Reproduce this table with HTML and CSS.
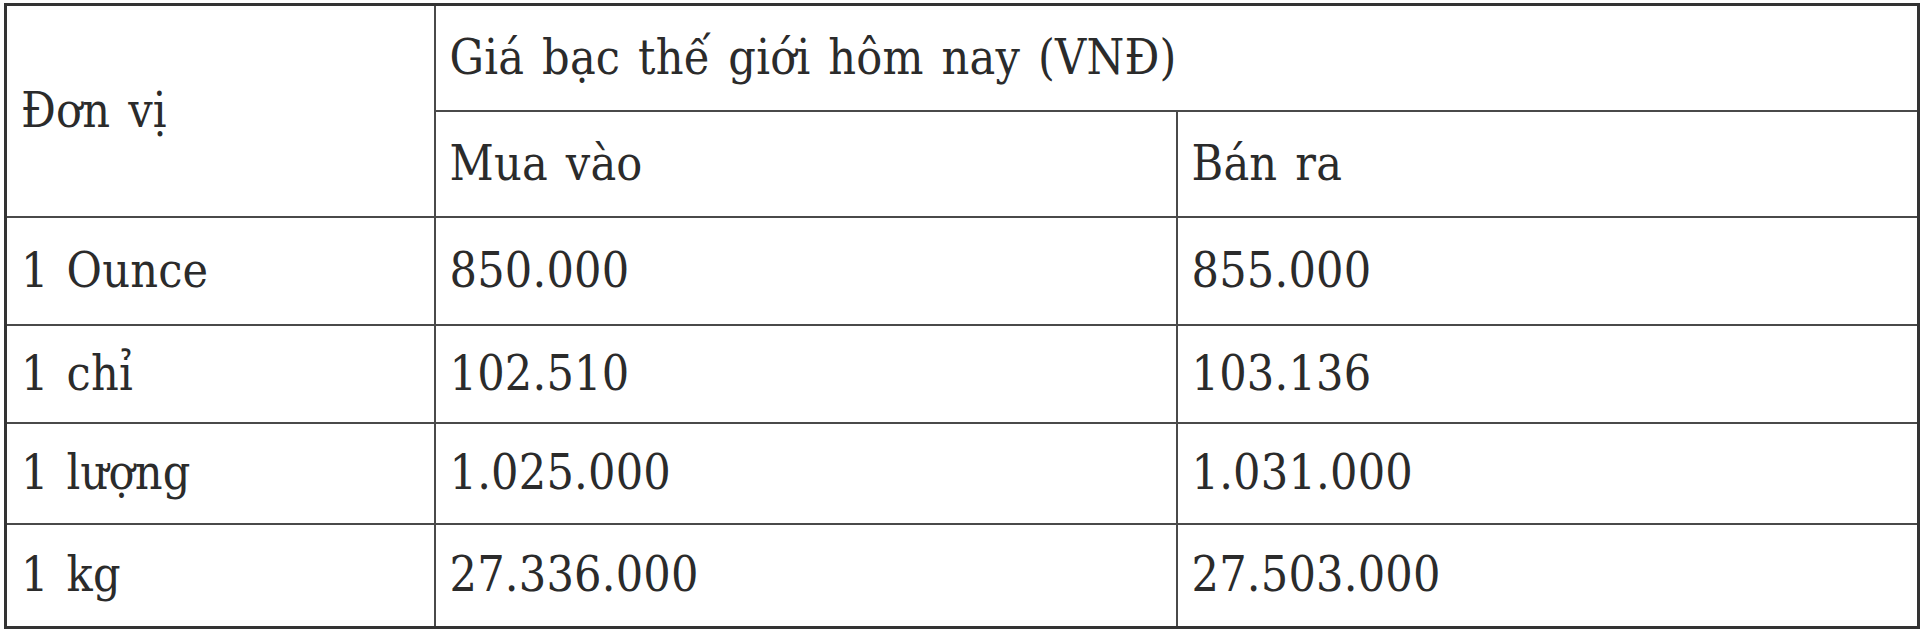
FILE: index.html
```html
<!DOCTYPE html>
<html lang="vi">
<head>
<meta charset="utf-8">
<title>Giá bạc thế giới hôm nay</title>
<link rel="stylesheet" href="styles.css">
</head>
<body>
<table class="price-table">
  <colgroup>
    <col class="col-unit">
    <col class="col-buy">
    <col class="col-sell">
  </colgroup>
  <tbody>
    <tr class="row-head1">
      <td rowspan="2">Đơn vị</td>
      <td colspan="2">Giá bạc thế giới hôm nay (VNĐ)</td>
    </tr>
    <tr class="row-head2">
      <td>Mua vào</td>
      <td>Bán ra</td>
    </tr>
    <tr class="row-ounce">
      <td>1 Ounce</td>
      <td>850.000</td>
      <td>855.000</td>
    </tr>
    <tr class="row-chi">
      <td>1 chỉ</td>
      <td>102.510</td>
      <td>103.136</td>
    </tr>
    <tr class="row-luong">
      <td>1 lượng</td>
      <td>1.025.000</td>
      <td>1.031.000</td>
    </tr>
    <tr class="row-kg">
      <td>1 kg</td>
      <td>27.336.000</td>
      <td>27.503.000</td>
    </tr>
  </tbody>
</table>
</body>
</html>
```

FILE: styles.css
```css
html, body {
  margin: 0;
  padding: 0;
  background: #ffffff;
}

body {
  padding: 3px 0 0 4px;
}

.price-table {
  border-collapse: collapse;
  table-layout: fixed;
  width: 1914px;
  border: 3px solid #333333;
  font-family: "DejaVu Serif Condensed", "DejaVu Serif", serif;
  font-stretch: condensed;
  font-size: 48px;
  letter-spacing: 0.2px;
  word-spacing: 4px;
  color: #2b2b2b;
}

.col-unit { width: 429px; }
.col-buy { width: 742px; }
.col-sell { width: 742px; }

.price-table td {
  border: 2px solid #4a4a4a;
  padding: 0 14px;
  vertical-align: middle;
  text-align: left;
  line-height: 1.2;
  white-space: nowrap;
}

.row-head1 { height: 106px; }
.row-head2 { height: 106px; }
.row-ounce { height: 108px; }
.row-chi { height: 98px; }
.row-luong { height: 101px; }
.row-kg { height: 104px; }
```
